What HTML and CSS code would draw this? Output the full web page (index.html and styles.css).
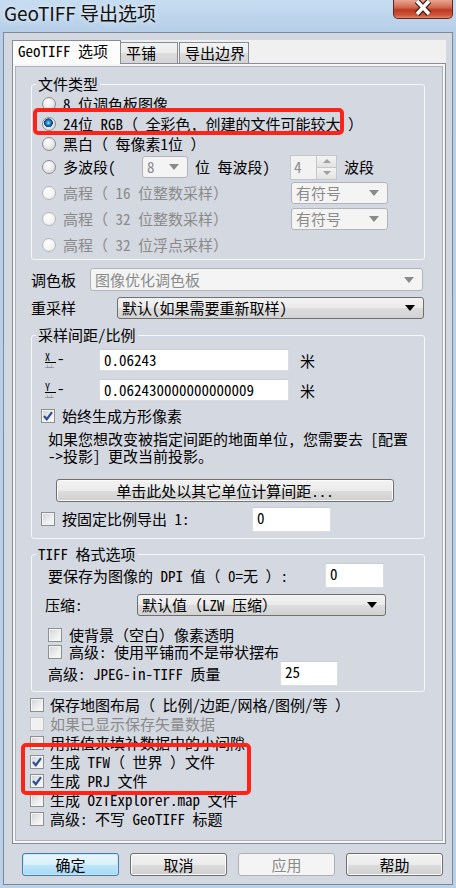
FILE: index.html
```html
<!DOCTYPE html>
<html lang="zh-CN">
<head>
    <meta charset="UTF-8">
    <meta name="viewport" content="width=device-width, initial-scale=1.0">
    <title>GeoTIFF 导出选项</title>
    <link rel="stylesheet" href="styles.css">
</head>
<body>
<div class="window">
    <!-- Title bar -->
    <div class="titlebar">
        <div class="title">GeoTIFF 导出选项</div>
        <div class="close-btn">
            <svg width="24" height="16" viewBox="0 0 24 16">
                <path d="M6 1 L18 14 M18 1 L6 14" stroke="#3a1812" stroke-width="6" fill="none"/>
                <path d="M6 1 L18 14 M18 1 L6 14" stroke="#ffffff" stroke-width="3.6" fill="none"/>
            </svg>
        </div>
    </div>

    <div class="client">
        <!-- Tabs -->
        <div class="tabs">
            <div class="tab tab-geo active">GeoTIFF 选项</div>
            <div class="tab tab-tile">平铺</div>
            <div class="tab tab-bound">导出边界</div>
        </div>

        <div class="page">
            <div class="panel">
                <!-- File type -->
                <fieldset class="group g-type">
                    <legend>文件类型</legend>
                    <div class="rows">
                        <div class="row"><label class="opt"><span class="radio"></span>8 位调色板图像</label></div>
                        <div class="row"><label class="opt"><span class="radio on"></span>24位 RGB（ 全彩色, 创建的文件可能较大 ）</label></div>
                        <div class="row"><label class="opt"><span class="radio"></span>黑白（ 每像素1位 ）</label></div>
                        <div class="row tall">
                            <label class="opt w-band"><span class="radio"></span>多波段(</label>
                            <div class="combo dis w-bits"><span>8</span><span class="arrow"></span></div>
                            <span class="w-per">位 每波段)</span>
                            <div class="spin">
                                <span class="spin-val">4</span>
                                <span class="spin-btns"><span class="up"></span><span class="down"></span></span>
                            </div>
                            <span class="after-spin">波段</span>
                        </div>
                        <div class="row tall dis">
                            <label class="opt w-elev"><span class="radio"></span>高程（ 16 位整数采样）</label>
                            <div class="combo dis w-sign"><span>有符号</span><span class="arrow"></span></div>
                        </div>
                        <div class="row tall dis">
                            <label class="opt w-elev"><span class="radio"></span>高程（ 32 位整数采样）</label>
                            <div class="combo dis w-sign"><span>有符号</span><span class="arrow"></span></div>
                        </div>
                        <div class="row tall dis">
                            <label class="opt w-elev"><span class="radio"></span>高程（ 32 位浮点采样）</label>
                        </div>
                    </div>
                </fieldset>

                <div class="field-row palette-row">
                    <span class="w-palette">调色板</span>
                    <div class="combo dis w-palette-combo"><span>图像优化调色板</span><span class="arrow"></span></div>
                </div>
                <div class="field-row resample-row">
                    <span class="w-resample">重采样</span>
                    <div class="combo w-resample-combo"><span>默认(如果需要重新取样)</span><span class="arrow"></span></div>
                </div>

                <!-- Spacing -->
                <fieldset class="group g-spacing">
                    <legend>采样间距/比例</legend>
                    <div class="xy-row first">
                        <span class="axis-label"><span class="axis"><span class="axis-letter">X</span><span class="ticks">┴┴</span></span><span class="dash">-</span></span>
                        <div class="field w-xy">0.06243</div>
                        <span class="unit">米</span>
                    </div>
                    <div class="xy-row">
                        <span class="axis-label"><span class="axis"><span class="axis-letter">Y</span><span class="ticks">┴┴</span></span><span class="dash">-</span></span>
                        <div class="field w-xy">0.062430000000000009</div>
                        <span class="unit">米</span>
                    </div>
                    <div class="check-row square-row">
                        <span class="check on"><svg width="12" height="12" viewBox="0 0 12 12"><path d="M2 6 L4.8 9.2 L10 2.2" stroke="#2f4f93" stroke-width="2.2" fill="none"/></svg></span>
                        <span>始终生成方形像素</span>
                    </div>
                    <p class="note">如果您想改变被指定间距的地面单位, 您需要去 [配置<br>->投影] 更改当前投影。</p>
                    <div class="btn wide-btn">单击此处以其它单位计算间距...</div>
                    <div class="check-row scale-row">
                        <span class="check"></span>
                        <span class="w-scale">按固定比例导出 1:</span>
                        <div class="field w-scale-field">0</div>
                    </div>
                </fieldset>

                <!-- TIFF -->
                <fieldset class="group g-tiff">
                    <legend>TIFF 格式选项</legend>
                    <div class="field-row dpi-row">
                        <span class="w-dpi">要保存为图像的 DPI 值（ 0=无 ）:</span>
                        <div class="field w-dpi-field">0</div>
                    </div>
                    <div class="field-row compress-row">
                        <span class="w-compress">压缩:</span>
                        <div class="combo w-compress-combo"><span>默认值（LZW 压缩）</span><span class="arrow"></span></div>
                    </div>
                    <div class="check-row tiff-check first">
                        <span class="check"></span><span>使背景（空白）像素透明</span>
                    </div>
                    <div class="check-row tiff-check">
                        <span class="check"></span><span>高级: 使用平铺而不是带状摆布</span>
                    </div>
                    <div class="field-row jpeg-row">
                        <span class="w-jpeg">高级: JPEG-in-TIFF 质量</span>
                        <div class="field w-jpeg-field">25</div>
                    </div>
                </fieldset>

                <!-- Misc options -->
                <div class="options">
                    <div class="check-row opt-row"><span class="check"></span><span>保存地图布局（ 比例/边距/网格/图例/等 ）</span></div>
                    <div class="check-row opt-row dis"><span class="check"></span><span>如果已显示保存矢量数据</span></div>
                    <div class="check-row opt-row"><span class="check"></span><span>用插值来填补数据中的小间隙</span></div>
                    <div class="check-row opt-row">
                        <span class="check on"><svg width="12" height="12" viewBox="0 0 12 12"><path d="M2 6 L4.8 9.2 L10 2.2" stroke="#2f4f93" stroke-width="2.2" fill="none"/></svg></span>
                        <span>生成 TFW（ 世界 ）文件</span>
                    </div>
                    <div class="check-row opt-row">
                        <span class="check on"><svg width="12" height="12" viewBox="0 0 12 12"><path d="M2 6 L4.8 9.2 L10 2.2" stroke="#2f4f93" stroke-width="2.2" fill="none"/></svg></span>
                        <span>生成 PRJ 文件</span>
                    </div>
                    <div class="check-row opt-row"><span class="check"></span><span>生成 OziExplorer.map 文件</span></div>
                    <div class="check-row opt-row"><span class="check"></span><span>高级: 不写 GeoTIFF 标题</span></div>
                </div>
            </div>
        </div>

        <!-- Dialog buttons -->
        <div class="buttons">
            <div class="btn default">确定</div>
            <div class="btn">取消</div>
            <div class="btn dis">应用</div>
            <div class="btn">帮助</div>
        </div>
    </div>

    <!-- Red annotation marks -->
    <div class="mark mark-rgb"></div>
    <div class="mark mark-files"></div>
</div>
</body>
</html>
```

FILE: styles.css
```css
* {
    box-sizing: border-box;
}

body {
    margin: 0;
    padding: 0;
    font-family: "Noto Sans Mono CJK SC", "Noto Sans CJK SC", "DejaVu Sans", sans-serif;
    font-size: 15px;
    color: #000;
    background: #bcd3eb;
}

.window {
    position: relative;
    width: 456px;
    height: 888px;
    overflow: hidden;
    background: linear-gradient(to bottom, #c6dcf1 0, #b7cfe8 30px, #bad1ea 100%);
}

/* Title bar */
.titlebar {
    height: 32px;
    display: flex;
    justify-content: space-between;
    align-items: flex-start;
}

.title {
    font-family: "Noto Sans CJK SC", sans-serif;
    font-size: 19px;
    line-height: 26px;
    padding-left: 4px;
    color: #111;
    text-shadow: 0 0 6px rgba(255, 255, 255, 0.9);
}

.close-btn {
    width: 60px;
    height: 19px;
    margin-right: 3px;
    border: 1px solid #5c2a22;
    border-top: none;
    border-radius: 0 0 5px 5px;
    background: linear-gradient(to bottom, #e7a692 0, #d46a52 40%, #bd3a22 55%, #cf5637 85%, #e08a6c 100%);
    display: flex;
    justify-content: center;
    align-items: flex-start;
}

/* Client area */
.client {
    margin: 0 3px;
    height: 853px;
    border: 1px solid #7c899b;
    background: #d4d8e0;
    padding: 7px 6px 0 8px;
}

.tabs {
    display: flex;
    align-items: flex-end;
    height: 23px;
    background: #f0f0f0;
}

.tab {
    height: 21px;
    border: 1px solid #898c95;
    border-bottom: none;
    background: linear-gradient(to bottom, #f3f3f3 0, #ebebeb 50%, #dcdcdc 51%, #d4d4d4 100%);
    line-height: 20px;
    padding-left: 5px;
    white-space: nowrap;
}

.tab.active {
    position: relative;
    z-index: 1;
    height: 24px;
    margin-bottom: -1px;
    background: #fcfcfc;
}

.tab-geo {
    width: 109px;
}

.tab-tile {
    width: 58px;
    margin-left: -1px;
}

.tab-bound {
    width: 70px;
    margin-left: 1px;
}

.page {
    height: 781px;
    border: 1px solid #898c95;
    background: #f6f6f6;
    padding: 2px;
}

.panel {
    height: 100%;
    border: 1px solid #aeb2ba;
    background: #d4d8e0;
    padding: 8px 17px 0 15px;
}

/* Group boxes */
.group {
    margin: 0;
    min-width: 0;
    border: 1px solid #f6f7f9;
    border-radius: 3px;
    padding: 0 0 1px 4px;
}

.group legend {
    padding: 0 2px;
    line-height: 18px;
}

.rows {
    margin-top: 1px;
    padding-left: 6px;
}

.row {
    display: flex;
    align-items: center;
    height: 20px;
    white-space: nowrap;
    line-height: 18px;
}

.row.tall {
    height: 26px;
}

.dis {
    color: #8a8a8a;
}

.opt {
    display: flex;
    align-items: center;
    gap: 7px;
}

.w-band {
    width: 100px;
}

.w-elev {
    width: 249px;
}

.w-bits {
    width: 46px;
}

.w-per {
    width: 102px;
    padding-left: 7px;
}

.w-sign {
    width: 97px;
}

.after-spin {
    margin-left: 7px;
}

/* Radio buttons */
.radio {
    width: 14px;
    height: 14px;
    border-radius: 50%;
    border: 1px solid #8b8d90;
    background: radial-gradient(circle at 40% 35%, #ffffff 0, #ececec 45%, #c9cbcf 100%);
    flex: none;
}

.dis .radio {
    border-color: #b6b8bb;
    background: radial-gradient(circle at 40% 35%, #ffffff 0, #f2f2f2 60%, #dcdde0 100%);
}

.radio.on {
    background:
        radial-gradient(circle at 45% 40%, #c9ecff 0, #3a9be0 1.6px, #0d4f96 3.6px, #0a3f7c 4.2px, transparent 4.6px),
        radial-gradient(circle at 40% 35%, #ffffff 0, #ececec 45%, #c9cbcf 100%);
}

/* Combo boxes */
.combo {
    display: flex;
    align-items: center;
    justify-content: space-between;
    height: 22px;
    border: 1px solid #707070;
    border-radius: 3px;
    background: linear-gradient(to bottom, #f3f3f3 0, #ebebeb 50%, #dddddd 51%, #d2d2d2 100%);
    padding: 0 8px 0 4px;
    line-height: 18px;
    white-space: nowrap;
    color: #000;
}

.combo .arrow {
    width: 0;
    height: 0;
    border-left: 5px solid transparent;
    border-right: 5px solid transparent;
    border-top: 6px solid #000;
}

.combo.dis {
    border-color: #b1b5b9;
    background: #f4f4f4;
    color: #8a8a8a;
}

.combo.dis .arrow {
    border-top-color: #8a8a8a;
}

/* Spinner */
.spin {
    display: flex;
    width: 47px;
    height: 25px;
    border: 1px solid #c3c6ca;
    background: #f2f2f2;
    color: #8a8a8a;
}

.spin-val {
    flex: 1;
    padding-left: 3px;
    line-height: 22px;
}

.spin-btns {
    width: 20px;
    display: flex;
    flex-direction: column;
    border-left: 1px solid #c3c6ca;
}

.spin-btns span {
    flex: 1;
    display: flex;
    justify-content: center;
    align-items: center;
    background: linear-gradient(to bottom, #f4f4f4, #e2e2e2);
}

.spin-btns .up {
    border-bottom: 1px solid #c3c6ca;
}

.spin-btns .up::after {
    content: "";
    border-left: 4px solid transparent;
    border-right: 4px solid transparent;
    border-bottom: 4px solid #a0a0a0;
}

.spin-btns .down::after {
    content: "";
    border-left: 4px solid transparent;
    border-right: 4px solid transparent;
    border-top: 4px solid #a0a0a0;
}

/* Labelled field rows */
.field-row {
    display: flex;
    align-items: center;
    white-space: nowrap;
    line-height: 18px;
}

.palette-row {
    margin-top: 8px;
    height: 23px;
}

.w-palette {
    width: 59px;
}

.w-palette-combo {
    width: 333px;
    height: 23px;
}

.resample-row {
    margin-top: 6px;
    height: 22px;
}

.w-resample {
    width: 86px;
}

.w-resample-combo {
    width: 307px;
}

/* Text fields */
.field {
    height: 22px;
    background: #fff;
    border: 1px solid #dadce1;
    border-top-color: #c9ccd2;
    padding-left: 4px;
    line-height: 20px;
    white-space: nowrap;
}

/* Spacing group */
.g-spacing {
    margin-top: 7px;
    padding-bottom: 6px;
}

.xy-row {
    display: flex;
    align-items: center;
    height: 30px;
    padding-left: 9px;
}

.xy-row.first {
    margin-top: 1px;
}

.axis-label {
    width: 54px;
    display: flex;
    align-items: center;
}

.axis {
    display: inline-flex;
    flex-direction: column;
    width: 11px;
    font-size: 10px;
}

.axis-letter {
    line-height: 11px;
    border-bottom: 1px solid #000;
}

.axis .ticks {
    font-size: 5px;
    line-height: 7px;
    letter-spacing: -1px;
}

.dash {
    margin-left: 1px;
    margin-top: -4px;
    line-height: 14px;
}

.w-xy {
    width: 190px;
}

.unit {
    margin-left: 11px;
}

.check-row {
    display: flex;
    align-items: center;
    gap: 7px;
    white-space: nowrap;
    line-height: 18px;
}

.square-row {
    height: 18px;
    margin-top: 2px;
    padding-left: 5px;
}

.note {
    margin: 5px 0 0;
    padding-left: 12px;
    line-height: 17px;
    white-space: nowrap;
}

.wide-btn {
    margin: 15px 0 0 20px;
    width: 338px;
    height: 24px;
}

.scale-row {
    margin-top: 4px;
    height: 26px;
    padding-left: 5px;
}

.w-scale {
    width: 183px;
}

.w-scale-field {
    width: 79px;
    height: 25px;
}

/* Check boxes */
.check {
    flex: none;
    width: 14px;
    height: 14px;
    border: 1px solid #8e8f8f;
    background: linear-gradient(135deg, #cfd2d6 0, #eeeff0 60%, #fbfbfb 100%);
    box-shadow: inset 0 0 0 1px #f4f4f4;
    display: flex;
    justify-content: center;
    align-items: center;
}

.dis .check {
    border-color: #c2c3c5;
    background: #f1f1f2;
}

/* TIFF group */
.g-tiff {
    margin-top: 6px;
    padding-bottom: 5px;
}

.dpi-row {
    height: 25px;
    padding-left: 12px;
}

.w-dpi {
    width: 277px;
}

.w-dpi-field {
    width: 59px;
    height: 25px;
}

.compress-row {
    margin-top: 6px;
    height: 22px;
    padding-left: 9px;
}

.w-compress {
    width: 92px;
}

.w-compress-combo {
    width: 249px;
}

.tiff-check {
    height: 17px;
    padding-left: 12px;
}

.tiff-check.first {
    margin-top: 10px;
}

.jpeg-row {
    margin-top: 1px;
    height: 25px;
    padding-left: 12px;
}

.w-jpeg {
    width: 232px;
}

.w-jpeg-field {
    width: 58px;
    height: 25px;
}

/* Bottom option list */
.options {
    margin-top: 3px;
    margin-left: -1px;
}

.opt-row {
    height: 19px;
    gap: 6px;
}

/* Buttons */
.btn {
    display: flex;
    justify-content: center;
    align-items: center;
    height: 23px;
    border: 1px solid #707070;
    border-radius: 3px;
    background: linear-gradient(to bottom, #f2f2f2 0, #ebebeb 50%, #dddddd 51%, #cfcfcf 100%);
    box-shadow: inset 0 0 0 1px #fafafa;
    white-space: nowrap;
}

.buttons {
    display: flex;
    gap: 11px;
    margin-top: 9px;
    padding-left: 10px;
}

.buttons .btn {
    width: 97px;
}

.btn.default {
    border-color: #3c7fb1;
    background: linear-gradient(to bottom, #eaf6fd 0, #d9f0fc 50%, #bee6fd 51%, #a7d9f5 100%);
    box-shadow: inset 0 0 0 1px #c5e8fa;
}

.btn.dis {
    border-color: #adb2b5;
    background: #f4f4f4;
    box-shadow: none;
    color: #8a8a8a;
}

/* Red annotation boxes drawn over the dialog */
.mark {
    position: absolute;
    border: 4px solid #ff2317;
    border-radius: 5px;
}

.mark-rgb {
    left: 33px;
    top: 108px;
    width: 311px;
    height: 27px;
}

.mark-files {
    left: 21px;
    top: 743px;
    width: 230px;
    height: 52px;
}
```
